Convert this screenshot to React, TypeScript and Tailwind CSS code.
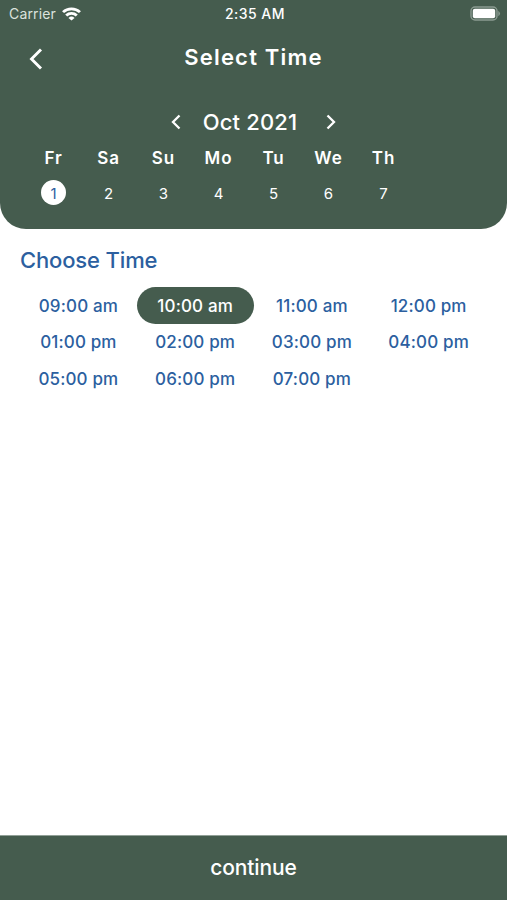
import React, { useState } from 'react';

const days = [
  { name: 'Fr', date: 1 },
  { name: 'Sa', date: 2 },
  { name: 'Su', date: 3 },
  { name: 'Mo', date: 4 },
  { name: 'Tu', date: 5 },
  { name: 'We', date: 6 },
  { name: 'Th', date: 7 },
];

const times = [
  '09:00 am', '10:00 am', '11:00 am', '12:00 pm',
  '01:00 pm', '02:00 pm', '03:00 pm', '04:00 pm',
  '05:00 pm', '06:00 pm', '07:00 pm',
];

const StatusBar: React.FC = () => (
  <div className="grid h-[27px] grid-cols-3 items-center pl-[9px] pr-[6px]">
    <div className="flex items-center gap-[6px]">
      <span className="text-[14px] tracking-[0.15px] text-[#dbe2dd]">Carrier</span>
      <svg width="19" height="14" viewBox="0 0 18 14" preserveAspectRatio="none" fill="none" stroke="white" strokeWidth="2.7">
        <path d="M1 5.1a11.4 11.4 0 0 1 16 0" />
        <path d="M4 8.5a7.1 7.1 0 0 1 10 0" />
        <path d="M9 13.6 6.1 10.9a4.1 4.1 0 0 1 5.8 0Z" fill="white" stroke="none" />
      </svg>
    </div>
    <span className="text-center text-[14px] font-medium tracking-[0.45px]">2:35 AM</span>
    <svg className="justify-self-end" width="31" height="15" viewBox="0 0 31 15">
      <rect x="1" y="1" width="26" height="13" rx="4" fill="none" stroke="#8b9b91" strokeWidth="1.4" />
      <rect x="2.8" y="2.8" width="22.4" height="9.4" rx="2" fill="white" />
      <path d="M28.3 4.7q3.4 2.8 0 5.6Z" fill="#8b9b91" />
    </svg>
  </div>
);

export default function App() {
  const [date, setDate] = useState(1);
  const [time, setTime] = useState('10:00 am');

  return (
    <div className="flex h-[900px] w-[507px] flex-col bg-white font-['Inter',sans-serif]">
      <header className="h-[229px] rounded-b-[26px] bg-[#455c4e] text-white">
        <StatusBar />

        {/* Title */}
        <div className="grid h-[60px] grid-cols-[1fr_auto_1fr] items-center">
          <button className="ml-[29px] w-fit pt-[4px]" aria-label="Back">
            <svg width="14" height="22" viewBox="0 0 14 22" fill="none" stroke="white" strokeWidth="2.9">
              <path d="M12 1.5 2.5 11l9.5 9.5" />
            </svg>
          </button>
          <h1 className="text-[22px] font-semibold tracking-[1.2px]">Select Time</h1>
        </div>

        {/* Month */}
        <div className="mt-[19px] flex h-8 items-center justify-center gap-[22px]">
          <button aria-label="Previous month">
            <svg width="10" height="16" viewBox="0 0 10 16" fill="none" stroke="white" strokeWidth="2.3">
              <path d="M8.5 1.5 2 8l6.5 6.5" />
            </svg>
          </button>
          <span className="text-[22px] font-medium tracking-[0.15px]">Oct 2021</span>
          <button className="ml-[7px]" aria-label="Next month">
            <svg width="10" height="16" viewBox="0 0 10 16" fill="none" stroke="white" strokeWidth="2.3">
              <path d="M1.5 1.5 8 8l-6.5 6.5" />
            </svg>
          </button>
        </div>

        {/* Days */}
        <div className="ml-[26px] flex">
          {days.map((day) => (
            <button key={day.date} className="flex w-[55px] flex-col items-center" onClick={() => setDate(day.date)}>
              <span className="h-[42px] pt-[8px] text-[17px] leading-6 font-semibold tracking-[0.9px]">{day.name}</span>
              <span
                className={`flex size-[25px] items-center justify-center rounded-full pt-[3px] text-[15px] ${
                  date === day.date ? 'bg-white text-[#2c5da0]' : ''
                }`}
              >
                {day.date}
              </span>
            </button>
          ))}
        </div>
      </header>

      <main className="flex-1 px-5 text-[#2c5f9f]">
        <h2 className="pt-[15px] text-[22px] leading-8 font-medium tracking-[-0.15px]">Choose Time</h2>
        <div className="mt-[11px] grid grid-cols-4">
          {times.map((slot) => (
            <button
              key={slot}
              onClick={() => setTime(slot)}
              className={`h-[36.7px] rounded-full pt-[2px] text-[17px] font-medium tracking-[0.15px] ${
                time === slot ? 'bg-[#455c4e] text-white' : ''
              }`}
            >
              {slot}
            </button>
          ))}
        </div>
      </main>

      <button className="h-[65px] border-t border-[#91a097] bg-[#455c4e] text-[21px] font-medium tracking-[-0.1px] text-white">
        continue
      </button>
    </div>
  );
}
